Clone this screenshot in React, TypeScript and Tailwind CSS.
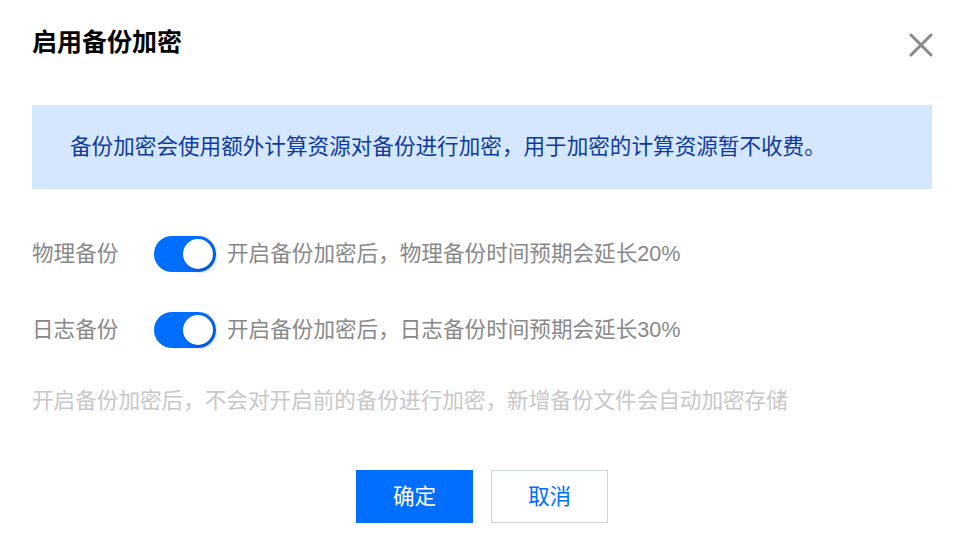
const font = { fontFamily: '"Liberation Sans", "Noto Sans CJK SC", sans-serif' };

const Toggle = () => (
  <div className="relative h-[36px] w-[62px] shrink-0 rounded-full bg-[#006eff]">
    <div className="absolute right-[3px] top-[3px] h-[30px] w-[30px] rounded-full bg-white shadow-[2px_2px_4px_rgba(0,40,140,0.45)]" />
  </div>
);

const Row = ({ label, text }: { label: string; text: string }) => (
  <div className="flex h-[36px] items-center">
    <span className="w-[122px] shrink-0 text-[#888888]">{label}</span>
    <Toggle />
    <span className="ml-[11px] text-[#888888]">{text}</span>
  </div>
);

export default function App() {
  return (
    <div
      className="h-[548px] w-[960px] overflow-hidden bg-white pl-8 pr-[28px] pt-[28px] text-[21.6px] leading-[30px]"
      style={font}
    >
      <div className="flex h-[28px] items-center justify-between">
        <h1 className="text-[25px] font-bold leading-[28px] text-black">启用备份加密</h1>
        <svg width="24" height="24" viewBox="0 0 24 24" className="mr-[-1px] mt-[6px]">
          <path d="M2 2L22 22M22 2L2 22" stroke="#888888" strokeWidth="3" strokeLinecap="round" />
        </svg>
      </div>

      <div className="mt-[49px] flex h-[84px] items-center bg-[#d5e7ff] pl-[38px] text-[#0d3a9e]">
        备份加密会使用额外计算资源对备份进行加密，用于加密的计算资源暂不收费。
      </div>

      <div className="mt-[47px] flex flex-col gap-[40px]">
        <Row label="物理备份" text="开启备份加密后，物理备份时间预期会延长20%" />
        <Row label="日志备份" text="开启备份加密后，日志备份时间预期会延长30%" />
      </div>

      <p className="mt-[38px] text-[#c8c8c8]">
        开启备份加密后，不会对开启前的备份进行加密，新增备份文件会自动加密存储
      </p>

      <div className="mt-[54px] flex justify-center gap-[18px]">
        <button className="h-[53px] w-[117px] bg-[#006eff] text-white">确定</button>
        <button className="h-[53px] w-[117px] border border-[#cfd5de] bg-white text-[#006eff]">取消</button>
      </div>
    </div>
  );
}
